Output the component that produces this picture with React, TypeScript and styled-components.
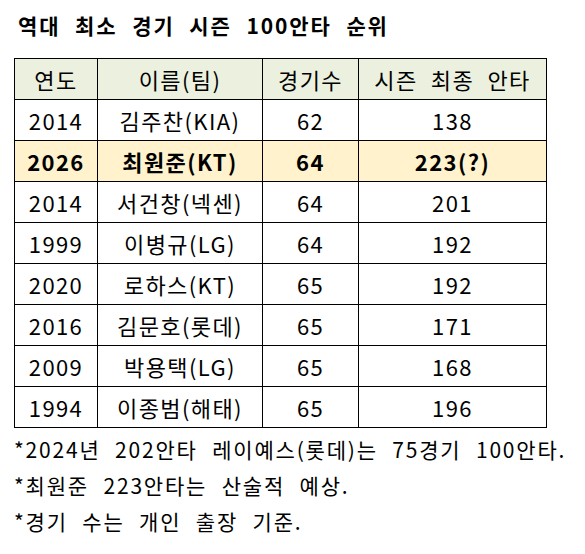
import styled, { createGlobalStyle } from 'styled-components';

const GlobalStyle = createGlobalStyle`
  html, body {
    margin: 0;
    padding: 0;
    background: #ffffff;
  }
  body {
    font-family: "Noto Sans CJK KR", "Noto Sans", sans-serif;
    color: #000000;
  }
`;

const Page = styled.div`
  width: 585px;
  height: 554px;
  padding: 8px 0 0 14px;
  box-sizing: border-box;
`;

const Title = styled.h1`
  margin: 0 0 16px 4px;
  font-size: 21px;
  font-weight: 700;
  line-height: 34px;
  letter-spacing: 1.9px;
  word-spacing: 8px;
`;

const Table = styled.table`
  width: 532px;
  border-collapse: collapse;
  table-layout: fixed;
`;

const Row = styled.tr<{ $tone?: 'head' | 'hot' }>`
  height: 41px;
  background: ${({ $tone }) =>
    $tone === 'head' ? '#ebf1de' : $tone === 'hot' ? '#fff2cc' : '#ffffff'};
  font-weight: ${({ $tone }) => ($tone === 'hot' ? 700 : 400)};
`;

const Cell = styled.td`
  border: 1px solid #000000;
  padding: 0;
  text-align: center;
  font-size: 22px;
  line-height: 1;
  letter-spacing: 1.4px;
  word-spacing: 7px;
  white-space: nowrap;
`;

const Notes = styled.div`
  margin-top: 3px;
  display: flex;
  flex-direction: column;
`;

const Note = styled.p`
  margin: 0;
  font-size: 21px;
  line-height: 36px;
  letter-spacing: 1.8px;
  word-spacing: 8px;
  white-space: nowrap;
`;

const rows = [
  ['2014', '김주찬(KIA)', '62', '138'],
  ['2026', '최원준(KT)', '64', '223(?)'],
  ['2014', '서건창(넥센)', '64', '201'],
  ['1999', '이병규(LG)', '64', '192'],
  ['2020', '로하스(KT)', '65', '192'],
  ['2016', '김문호(롯데)', '65', '171'],
  ['2009', '박용택(LG)', '65', '168'],
  ['1994', '이종범(해태)', '65', '196'],
];

const App = () => {
  return (
    <Page>
      <GlobalStyle />
      <Title>역대 최소 경기 시즌 100안타 순위</Title>
      <Table>
        <colgroup>
          <col style={{ width: 83 }} />
          <col style={{ width: 165 }} />
          <col style={{ width: 96 }} />
          <col style={{ width: 188 }} />
        </colgroup>
        <tbody>
          <Row $tone="head">
            <Cell>연도</Cell>
            <Cell>이름(팀)</Cell>
            <Cell>경기수</Cell>
            <Cell>시즌 최종 안타</Cell>
          </Row>
          {rows.map((r) => (
            <Row key={r[1]} $tone={r[0] === '2026' ? 'hot' : undefined}>
              {r.map((v, i) => (
                <Cell key={i}>{v}</Cell>
              ))}
            </Row>
          ))}
        </tbody>
      </Table>
      <Notes>
        <Note>*2024년 202안타 레이예스(롯데)는 75경기 100안타.</Note>
        <Note>*최원준 223안타는 산술적 예상.</Note>
        <Note>*경기 수는 개인 출장 기준.</Note>
      </Notes>
    </Page>
  );
};

export default App;
